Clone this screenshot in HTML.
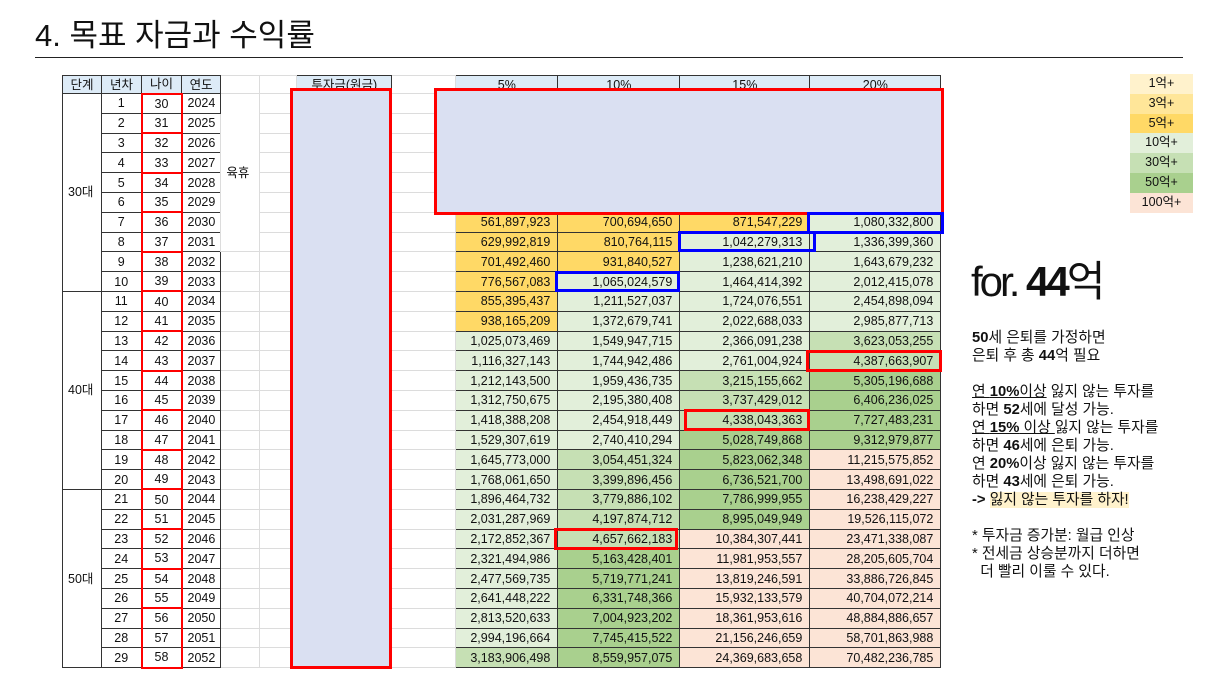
<!DOCTYPE html>
<html><head><meta charset="utf-8">
<style>
body{margin:0;width:1216px;height:684px;background:#fff;position:relative;overflow:hidden;font-family:"Liberation Sans","Noto Sans CJK KR",sans-serif;color:#111}
.title{position:absolute;left:35px;top:17px;font-size:31px;line-height:38px}
.hr{position:absolute;left:35px;top:57px;width:1148px;height:1px;background:#222}
table{position:absolute;left:62px;top:75px;border-collapse:collapse;table-layout:fixed;font-size:12.5px}
td{padding:0 5px;white-space:nowrap;overflow:hidden;box-sizing:border-box;line-height:14px}
tr{height:19.8px}
tr.h{height:18px}
.b{border:1px solid #333}
.hd{background:#ddebf7;text-align:center;border:1px solid #333}
.c{text-align:center}
.g{border:1px solid #dcdcdc}
.n{text-align:right;border:1px solid #333;padding-right:7px}
.age{text-align:center;border:1px solid #333;border-left:2px solid #f00;border-right:2px solid #f00}
.rt{border-top:2px solid #f00}
.y{background:#ffd966}.g1{background:#e2efda}.g2{background:#c6e0b4}.g3{background:#a9d08e}.p{background:#fce4d6}
.box{position:absolute;box-sizing:border-box}
.red{border:3px solid #f00}.blue{border:3px solid #00f}
.fill{background:#dae0f2}
.leg{position:absolute;left:1130px;top:74px;width:63px;font-size:12.5px}
.leg div{height:19.8px;line-height:19.8px;text-align:center}
.for{position:absolute;left:971px;top:252px;font-size:42px;letter-spacing:-3px;line-height:60px}
.txt{position:absolute;left:972px;top:329px;font-size:14.8px;line-height:18px}
</style></head><body>
<div class="title">4. 목표 자금과 수익률</div>
<div class="hr"></div>
<table>
<colgroup><col style="width:39px"><col style="width:40px"><col style="width:40px"><col style="width:38px"><col style="width:39px"><col style="width:37px"><col style="width:95px"><col style="width:64px"><col style="width:102px"><col style="width:122px"><col style="width:130px"><col style="width:131px"></colgroup>
<tr class="h"><td class="hd">단계</td><td class="hd">년차</td><td class="hd">나이</td><td class="hd">연도</td><td class="g"></td><td class="g"></td><td class="hd">투자금(원금)</td><td class="g"></td><td class="hd">5%</td><td class="hd">10%</td><td class="hd">15%</td><td class="hd">20%</td></tr>
<tr><td class="b" rowspan="10" style="vertical-align:middle;padding-left:5px">30대</td><td class="b c">1</td><td class="age rt">30</td><td class="b c">2024</td><td class="g" rowspan="8">육휴</td><td class="g"></td><td class="g"></td><td class="g"></td><td></td><td></td><td></td><td></td></tr>
<tr><td class="b c">2</td><td class="age">31</td><td class="b c">2025</td><td class="g"></td><td class="g"></td><td class="g"></td><td></td><td></td><td></td><td></td></tr>
<tr><td class="b c">3</td><td class="age rt">32</td><td class="b c">2026</td><td class="g"></td><td class="g"></td><td class="g"></td><td></td><td></td><td></td><td></td></tr>
<tr><td class="b c">4</td><td class="age">33</td><td class="b c">2027</td><td class="g"></td><td class="g"></td><td class="g"></td><td></td><td></td><td></td><td></td></tr>
<tr><td class="b c">5</td><td class="age rt">34</td><td class="b c">2028</td><td class="g"></td><td class="g"></td><td class="g"></td><td></td><td></td><td></td><td></td></tr>
<tr><td class="b c">6</td><td class="age">35</td><td class="b c">2029</td><td class="g"></td><td class="g"></td><td class="g"></td><td></td><td></td><td></td><td></td></tr>
<tr><td class="b c">7</td><td class="age rt">36</td><td class="b c">2030</td><td class="g"></td><td class="g"></td><td class="g"></td><td class="n y">561,897,923</td><td class="n y">700,694,650</td><td class="n y">871,547,229</td><td class="n g1">1,080,332,800</td></tr>
<tr><td class="b c">8</td><td class="age">37</td><td class="b c">2031</td><td class="g"></td><td class="g"></td><td class="g"></td><td class="n y">629,992,819</td><td class="n y">810,764,115</td><td class="n g1">1,042,279,313</td><td class="n g1">1,336,399,360</td></tr>
<tr><td class="b c">9</td><td class="age rt">38</td><td class="b c">2032</td><td class="g"></td><td class="g"></td><td class="g"></td><td class="g"></td><td class="n y">701,492,460</td><td class="n y">931,840,527</td><td class="n g1">1,238,621,210</td><td class="n g1">1,643,679,232</td></tr>
<tr><td class="b c">10</td><td class="age">39</td><td class="b c">2033</td><td class="g"></td><td class="g"></td><td class="g"></td><td class="g"></td><td class="n y">776,567,083</td><td class="n g1">1,065,024,579</td><td class="n g1">1,464,414,392</td><td class="n g1">2,012,415,078</td></tr>
<tr><td class="b" rowspan="10" style="vertical-align:middle;padding-left:5px">40대</td><td class="b c">11</td><td class="age rt">40</td><td class="b c">2034</td><td class="g"></td><td class="g"></td><td class="g"></td><td class="g"></td><td class="n y">855,395,437</td><td class="n g1">1,211,527,037</td><td class="n g1">1,724,076,551</td><td class="n g1">2,454,898,094</td></tr>
<tr><td class="b c">12</td><td class="age">41</td><td class="b c">2035</td><td class="g"></td><td class="g"></td><td class="g"></td><td class="g"></td><td class="n y">938,165,209</td><td class="n g1">1,372,679,741</td><td class="n g1">2,022,688,033</td><td class="n g1">2,985,877,713</td></tr>
<tr><td class="b c">13</td><td class="age rt">42</td><td class="b c">2036</td><td class="g"></td><td class="g"></td><td class="g"></td><td class="g"></td><td class="n g1">1,025,073,469</td><td class="n g1">1,549,947,715</td><td class="n g1">2,366,091,238</td><td class="n g2">3,623,053,255</td></tr>
<tr><td class="b c">14</td><td class="age">43</td><td class="b c">2037</td><td class="g"></td><td class="g"></td><td class="g"></td><td class="g"></td><td class="n g1">1,116,327,143</td><td class="n g1">1,744,942,486</td><td class="n g1">2,761,004,924</td><td class="n g2">4,387,663,907</td></tr>
<tr><td class="b c">15</td><td class="age rt">44</td><td class="b c">2038</td><td class="g"></td><td class="g"></td><td class="g"></td><td class="g"></td><td class="n g1">1,212,143,500</td><td class="n g1">1,959,436,735</td><td class="n g2">3,215,155,662</td><td class="n g3">5,305,196,688</td></tr>
<tr><td class="b c">16</td><td class="age">45</td><td class="b c">2039</td><td class="g"></td><td class="g"></td><td class="g"></td><td class="g"></td><td class="n g1">1,312,750,675</td><td class="n g1">2,195,380,408</td><td class="n g2">3,737,429,012</td><td class="n g3">6,406,236,025</td></tr>
<tr><td class="b c">17</td><td class="age rt">46</td><td class="b c">2040</td><td class="g"></td><td class="g"></td><td class="g"></td><td class="g"></td><td class="n g1">1,418,388,208</td><td class="n g1">2,454,918,449</td><td class="n g2">4,338,043,363</td><td class="n g3">7,727,483,231</td></tr>
<tr><td class="b c">18</td><td class="age">47</td><td class="b c">2041</td><td class="g"></td><td class="g"></td><td class="g"></td><td class="g"></td><td class="n g1">1,529,307,619</td><td class="n g1">2,740,410,294</td><td class="n g3">5,028,749,868</td><td class="n g3">9,312,979,877</td></tr>
<tr><td class="b c">19</td><td class="age rt">48</td><td class="b c">2042</td><td class="g"></td><td class="g"></td><td class="g"></td><td class="g"></td><td class="n g1">1,645,773,000</td><td class="n g2">3,054,451,324</td><td class="n g3">5,823,062,348</td><td class="n p">11,215,575,852</td></tr>
<tr><td class="b c">20</td><td class="age">49</td><td class="b c">2043</td><td class="g"></td><td class="g"></td><td class="g"></td><td class="g"></td><td class="n g1">1,768,061,650</td><td class="n g2">3,399,896,456</td><td class="n g3">6,736,521,700</td><td class="n p">13,498,691,022</td></tr>
<tr><td class="b" rowspan="9" style="vertical-align:middle;padding-left:5px">50대</td><td class="b c">21</td><td class="age rt">50</td><td class="b c">2044</td><td class="g"></td><td class="g"></td><td class="g"></td><td class="g"></td><td class="n g1">1,896,464,732</td><td class="n g2">3,779,886,102</td><td class="n g3">7,786,999,955</td><td class="n p">16,238,429,227</td></tr>
<tr><td class="b c">22</td><td class="age">51</td><td class="b c">2045</td><td class="g"></td><td class="g"></td><td class="g"></td><td class="g"></td><td class="n g1">2,031,287,969</td><td class="n g2">4,197,874,712</td><td class="n g3">8,995,049,949</td><td class="n p">19,526,115,072</td></tr>
<tr><td class="b c">23</td><td class="age rt">52</td><td class="b c">2046</td><td class="g"></td><td class="g"></td><td class="g"></td><td class="g"></td><td class="n g1">2,172,852,367</td><td class="n g2">4,657,662,183</td><td class="n p">10,384,307,441</td><td class="n p">23,471,338,087</td></tr>
<tr><td class="b c">24</td><td class="age">53</td><td class="b c">2047</td><td class="g"></td><td class="g"></td><td class="g"></td><td class="g"></td><td class="n g1">2,321,494,986</td><td class="n g3">5,163,428,401</td><td class="n p">11,981,953,557</td><td class="n p">28,205,605,704</td></tr>
<tr><td class="b c">25</td><td class="age rt">54</td><td class="b c">2048</td><td class="g"></td><td class="g"></td><td class="g"></td><td class="g"></td><td class="n g1">2,477,569,735</td><td class="n g3">5,719,771,241</td><td class="n p">13,819,246,591</td><td class="n p">33,886,726,845</td></tr>
<tr><td class="b c">26</td><td class="age">55</td><td class="b c">2049</td><td class="g"></td><td class="g"></td><td class="g"></td><td class="g"></td><td class="n g1">2,641,448,222</td><td class="n g3">6,331,748,366</td><td class="n p">15,932,133,579</td><td class="n p">40,704,072,214</td></tr>
<tr><td class="b c">27</td><td class="age rt">56</td><td class="b c">2050</td><td class="g"></td><td class="g"></td><td class="g"></td><td class="g"></td><td class="n g1">2,813,520,633</td><td class="n g3">7,004,923,202</td><td class="n p">18,361,953,616</td><td class="n p">48,884,886,657</td></tr>
<tr><td class="b c">28</td><td class="age">57</td><td class="b c">2051</td><td class="g"></td><td class="g"></td><td class="g"></td><td class="g"></td><td class="n g1">2,994,196,664</td><td class="n g3">7,745,415,522</td><td class="n p">21,156,246,659</td><td class="n p">58,701,863,988</td></tr>
<tr><td class="b c">29</td><td class="age" style="border-bottom:2px solid #f00">58</td><td class="b c">2052</td><td class="g"></td><td class="g"></td><td class="g"></td><td class="g"></td><td class="n g2">3,183,906,498</td><td class="n g3">8,559,957,075</td><td class="n p">24,369,683,658</td><td class="n p">70,482,236,785</td></tr>
</table>

<div class="box red fill" style="left:290px;top:88px;width:102px;height:581px"></div>
<div class="box red fill" style="left:434px;top:88px;width:510px;height:127px"></div>
<div class="box blue" style="left:807px;top:212px;width:137px;height:22px"></div>
<div class="box blue" style="left:678px;top:231px;width:138px;height:21px"></div>
<div class="box blue" style="left:555px;top:271px;width:125px;height:21px"></div>
<div class="box red" style="left:806px;top:350px;width:136px;height:22px"></div>
<div class="box red" style="left:684px;top:409px;width:126px;height:22px"></div>
<div class="box red" style="left:554px;top:528px;width:124px;height:22px"></div>

<div class="leg">
<div style="background:#fff2cc">1억+</div>
<div style="background:#ffe699">3억+</div>
<div style="background:#ffd966">5억+</div>
<div style="background:#e2efda">10억+</div>
<div style="background:#c6e0b4">30억+</div>
<div style="background:#a9d08e">50억+</div>
<div style="background:#fce4d6">100억+</div>
</div>

<div class="for">for. <b>44</b>억</div>
<div class="txt">
<b>50</b>세 은퇴를 가정하면<br>
은퇴 후 총 <b>44</b>억 필요<br><br>
<u>연 <b>10%</b>이상</u> 잃지 않는 투자를<br>
하면 <b>52</b>세에 달성 가능.<br>
<u>연 <b>15%</b> 이상 </u>잃지 않는 투자를<br>
하면 <b>46</b>세에 은퇴 가능.<br>
연 <b>20%</b>이상 잃지 않는 투자를<br>
하면 <b>43</b>세에 은퇴 가능.<br>
<b>-&gt;</b> <span style="background:#fff2cc">잃지 않는 투자를 하자!</span><br><br>
* 투자금 증가분: 월급 인상<br>
* 전세금 상승분까지 더하면<br>
&nbsp;&nbsp;더 빨리 이룰 수 있다.
</div>
</body></html>
